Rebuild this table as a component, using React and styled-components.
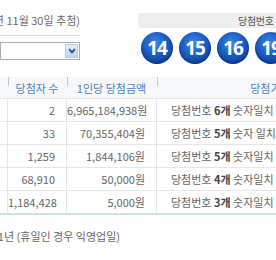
import styled, { createGlobalStyle } from 'styled-components';

const GlobalStyle = createGlobalStyle`
  html, body {
    margin: 0;
    padding: 0;
    background: #fff;
    overflow: hidden;
  }
  body {
    font-family: "Noto Sans CJK KR", "Noto Sans", sans-serif;
    font-size: 11px;
    color: #666;
  }
`;

const results = [
  { rank: '1등', winners: '2', prize: '6,965,184,938원', count: '6개', rule: '숫자일치' },
  { rank: '2등', winners: '33', prize: '70,355,404원', count: '5개', rule: '숫자 일치 + 보너스번호일치' },
  { rank: '3등', winners: '1,259', prize: '1,844,106원', count: '5개', rule: '숫자일치' },
  { rank: '4등', winners: '68,910', prize: '50,000원', count: '4개', rule: '숫자일치' },
  { rank: '5등', winners: '1,184,428', prize: '5,000원', count: '3개', rule: '숫자일치' },
];

const numbers = [14, 15, 16, 19];

function App() {
  return (
    <>
      <GlobalStyle />
      <Page>
        <Top>
          <DrawInfo>
            <Clip width="80px">
              <DateText>(제 574회 2013년 11월 30일 추첨)</DateText>
            </Clip>
            <Divider />
            <Select>
              <SelectArrow>
                <svg width="8" height="6" viewBox="0 0 8 6">
                  <path d="M1 1.2 L4 4.4 L7 1.2" fill="none" stroke="#1d4f9c" strokeWidth="1.8" />
                </svg>
              </SelectArrow>
            </Select>
          </DrawInfo>
          <WinPanel>
            <PanelBar>
              <PanelLabel>당첨번호</PanelLabel>
            </PanelBar>
            <Balls>
              {numbers.map(n => (
                <Ball key={n}>{n}</Ball>
              ))}
            </Balls>
          </WinPanel>
        </Top>

        <Table>
          <colgroup>
            <col style={{ width: 57 }} />
            <col style={{ width: 59 }} />
            <col style={{ width: 90 }} />
            <col style={{ width: 228 }} />
          </colgroup>
          <thead>
            <tr>
              <Th>순위</Th>
              <Th>당첨자 수</Th>
              <Th>1인당 당첨금액</Th>
              <Th>당첨기준</Th>
            </tr>
          </thead>
          <tbody>
            {results.map(r => (
              <tr key={r.rank}>
                <Td align="center">{r.rank}</Td>
                <Td align="right">{r.winners}</Td>
                <Td align="right">{r.prize}</Td>
                <Td align="left">
                  당첨번호 <strong>{r.count}</strong> {r.rule}
                </Td>
              </tr>
            ))}
          </tbody>
        </Table>

        <Clip width="120px">
          <Note>지급기한 : 지급개시일로부터 1년 (휴일인 경우 익영업일)</Note>
        </Clip>
      </Page>
    </>
  );
}

const Page = styled.div`
  width: 276px;
  height: 260px;
  overflow: hidden;
`;

const Top = styled.div`
  display: flex;
  height: 77px;
`;

const DrawInfo = styled.div`
  width: 80px;
  padding-top: 12px;
  display: flex;
  flex-direction: column;
`;

const Clip = styled.div`
  width: ${props => props.width};
  display: flex;
  justify-content: flex-end;
  overflow: hidden;
  white-space: nowrap;
`;

const DateText = styled.span`
  font-size: 11px;
  line-height: 16px;
  color: #6a6a6a;
  flex-shrink: 0;
`;

const Divider = styled.div`
  height: 1px;
  background: #dcdcdc;
  margin: 7px 0 6px;
`;

const Select = styled.div`
  height: 18px;
  border: 1px solid #a5acb5;
  box-sizing: border-box;
  display: flex;
  justify-content: flex-end;
  padding: 1px;
`;

const SelectArrow = styled.div`
  width: 13px;
  background: linear-gradient(#e6eefb, #c3d5f2);
  border: 1px solid #b7c8e4;
  box-sizing: border-box;
  display: flex;
  align-items: center;
  justify-content: center;
`;

const WinPanel = styled.div`
  margin-left: 58px;
  flex: 1;
  padding-top: 13px;
`;

const PanelBar = styled.div`
  height: 15px;
  background: #eeeeee;
  border-radius: 3px 0 0 3px;
  display: flex;
  align-items: center;
`;

const PanelLabel = styled.span`
  margin-left: 100px;
  font-size: 10px;
  color: #555;
  letter-spacing: -0.3px;
`;

const Balls = styled.div`
  display: flex;
  gap: 6px;
  margin: 4px 0 0 3px;
`;

const Ball = styled.div`
  flex-shrink: 0;
  width: 32px;
  height: 32px;
  border-radius: 50%;
  background: radial-gradient(circle at 45% 35%, #3f86e6 0%, #1a5cc4 45%, #0b3b94 80%, #0a2c70 100%);
  box-shadow: inset 0 -1px 2px rgba(0, 0, 0, 0.3);
  color: #fff;
  font-family: "Open Sans", "Liberation Sans", sans-serif;
  font-weight: 700;
  font-size: 19px;
  letter-spacing: -1px;
  display: flex;
  align-items: center;
  justify-content: center;
`;

const Table = styled.table`
  margin-left: -50px;
  border-collapse: collapse;
  table-layout: fixed;
  width: 434px;
  border-bottom: 2px solid #c9e3de;
`;

const Th = styled.th`
  position: relative;
  height: 21px;
  padding: 0;
  background: #f6f8fa;
  border-bottom: 1px solid #dfe5ea;
  color: #4a80c4;
  font-weight: 400;
  font-size: 11px;
  text-align: center;

  &::before {
    content: '';
    position: absolute;
    left: 0;
    top: 0;
    width: 1px;
    height: 9px;
    background: #b9c9da;
  }
`;

const Td = styled.td`
  height: 22px;
  padding: ${props => (props.align === 'left' ? '0 0 0 14px' : props.align === 'right' ? '0 11px 0 0' : '0')};
  border: 1px solid #e4e6e8;
  border-top: none;
  text-align: ${props => props.align};
  color: #666;
  font-size: 11px;
  white-space: nowrap;
  overflow: hidden;

  strong {
    color: #444;
    font-weight: 700;
  }
`;

const Note = styled.span`
  flex-shrink: 0;
  margin-top: 13px;
  font-size: 11px;
  line-height: 16px;
  color: #666;
`;

export default App;
